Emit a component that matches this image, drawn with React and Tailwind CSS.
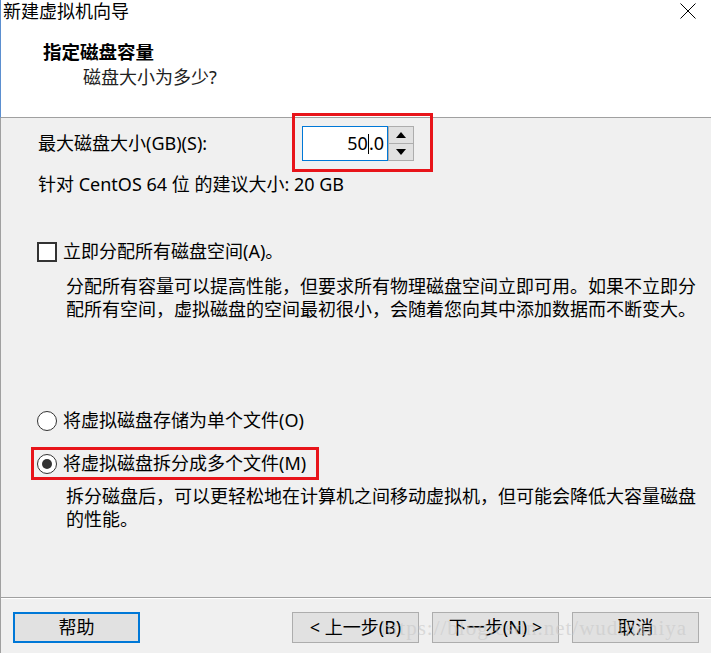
import React from 'react'

const font = "font-['Noto_Sans','Noto_Sans_CJK_SC',sans-serif]"

function Checkbox() {
  return <div className="w-[20px] h-[20px] border-2 border-[#333] bg-white shrink-0" />
}

function Radio({ checked }) {
  return (
    <div className="w-[20px] h-[20px] rounded-full border border-[#333] bg-white flex items-center justify-center shrink-0">
      {checked && <div className="w-[10px] h-[10px] rounded-full bg-[#333]" />}
    </div>
  )
}

function Btn({ children, primary }) {
  return (
    <div
      className={
        'h-[31px] flex items-center justify-center bg-[#e1e1e1] text-[18px] ' +
        (primary ? 'w-[127px] border-2 border-[#0078d7]' : 'w-[127px] border border-[#adadad]')
      }
    >
      {children}
    </div>
  )
}

export default function App() {
  return (
    <div className={`w-[711px] h-[653px] bg-[#f0f0f0] flex flex-col relative overflow-hidden text-black ${font}`}>
      {/* Header */}
      <header className="h-[118px] bg-white border-b border-[#a0a0a0] border-l border-l-[#5b8fd0] shrink-0">
        <div className="flex items-start justify-between h-[23px]">
          <span className="pl-[2px] text-[18px] leading-[23px]">新建虚拟机向导</span>
          <svg width="16" height="16" viewBox="0 0 16 16" className="mr-[15px] mt-[3px]">
            <path d="M0.5 0.5 L15.5 15.5 M15.5 0.5 L0.5 15.5" stroke="#000" strokeWidth="1" />
          </svg>
        </div>
        <h1 className="pl-[42px] mt-[17px] text-[18.5px] leading-[23px] font-bold">指定磁盘容量</h1>
        <p className="pl-[82px] mt-[3px] text-[18px] leading-[23px] text-[#222]">磁盘大小为多少?</p>
      </header>

      {/* Body */}
      <main className="flex-1 border-l border-l-[#a0a0a0] text-[18px] leading-[23px]">
        <div className="flex items-center mt-[8px] h-[35px]">
          <span className="pl-[37px] w-[301px]">最大磁盘大小(GB)(S):</span>
          <div className="w-[86px] h-[35px] border border-[#0078d7] bg-white flex items-center justify-end pr-[3px] text-[18px]">
            <span>50</span>
            <span className="w-px h-[20px] bg-black" />
            <span>.0</span>
          </div>
          <div className="flex flex-col w-[26px] h-[35px]">
            <div className="flex-1 border border-[#adadad] bg-[#e1e1e1] flex items-center justify-center">
              <svg width="10" height="6" viewBox="0 0 10 6"><path d="M5 0 L10 6 L0 6 Z" fill="#000" /></svg>
            </div>
            <div className="flex-1 border border-t-0 border-[#adadad] bg-[#e1e1e1] flex items-center justify-center">
              <svg width="10" height="6" viewBox="0 0 10 6"><path d="M0 0 L10 0 L5 6 Z" fill="#000" /></svg>
            </div>
          </div>
        </div>

        <p className="pl-[37px] mt-[12px]">针对 CentOS 64 位 的建议大小: 20 GB</p>

        <div className="flex items-center gap-[6px] pl-[36px] mt-[44px] h-[23px]">
          <Checkbox />
          <span>立即分配所有磁盘空间(A)。</span>
        </div>
        <p className="pl-[65px] mt-[12px] whitespace-nowrap">
          分配所有容量可以提高性能，但要求所有物理磁盘空间立即可用。如果不立即分
          <br />
          配所有空间，虚拟磁盘的空间最初很小，会随着您向其中添加数据而不断变大。
        </p>

        <div className="flex items-center gap-[6px] pl-[36px] mt-[88px] h-[23px]">
          <Radio />
          <span>将虚拟磁盘存储为单个文件(O)</span>
        </div>
        <div className="flex items-center gap-[6px] pl-[36px] mt-[20px] h-[23px]">
          <Radio checked />
          <span>将虚拟磁盘拆分成多个文件(M)</span>
        </div>
        <p className="pl-[65px] mt-[10px] whitespace-nowrap">
          拆分磁盘后，可以更轻松地在计算机之间移动虚拟机，但可能会降低大容量磁盘
          <br />
          的性能。
        </p>
      </main>

      {/* Footer */}
      <footer className="h-[56px] shrink-0 border-t border-[#a0a0a0] border-l border-l-[#a0a0a0]">
        <div className="border-t border-white h-full flex items-start pt-[13px] pl-[12px] pr-[12px]">
          <Btn primary>帮助</Btn>
          <div className="flex-1" />
          <div className="flex gap-[13px]">
            <Btn>&lt; 上一步(B)</Btn>
            <Btn>下一步(N) &gt;</Btn>
            <Btn>取消</Btn>
          </div>
        </div>
      </footer>

      {/* red annotation boxes */}
      <div className="absolute left-[292px] top-[113px] w-[141px] h-[59px] border-[3px] border-[#e8141a] pointer-events-none" />
      <div className="absolute left-[31px] top-[447px] w-[288px] h-[33px] border-[3px] border-[#e8141a] pointer-events-none" />

      {/* watermark */}
      <div className="absolute left-[381px] top-[615px] text-[21px] leading-[26px] tracking-[1px] text-[#c8c8c8]/60 font-['Liberation_Serif',serif] pointer-events-none">
        https://blog.csdn.net/wudinaniya
      </div>
    </div>
  )
}
